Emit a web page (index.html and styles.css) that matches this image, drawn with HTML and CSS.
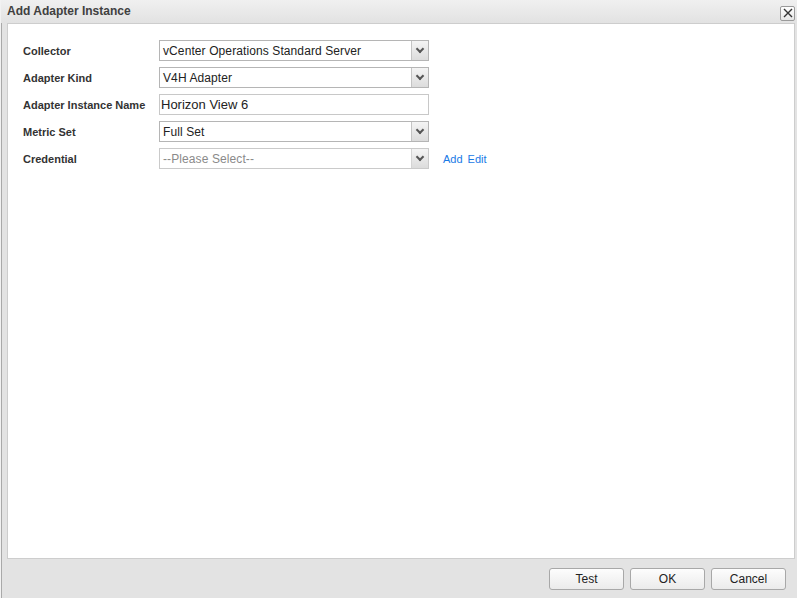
FILE: index.html
```html
<!DOCTYPE html>
<html lang="en">
<head>
  <meta charset="UTF-8" />
  <title>Add Adapter Instance</title>
  <link rel="stylesheet" href="styles.css">
</head>
<body>
  <div class="dialog">
    <!-- Title bar -->
    <div class="dialog-header">
      <span class="dialog-title">Add Adapter Instance</span>
      <span class="close-btn">
        <svg width="10" height="10" viewBox="0 0 10 10">
          <path d="M1 1 L9 9 M9 1 L1 9" stroke="#333" stroke-width="1.4" fill="none"/>
        </svg>
      </span>
    </div>

    <!-- Form body -->
    <div class="dialog-body">
      <div class="form-row">
        <label>Collector</label>
        <div class="combo">
          <span class="combo-text">vCenter Operations Standard Server</span>
          <span class="combo-btn"><i class="chevron"></i></span>
        </div>
      </div>
      <div class="form-row">
        <label>Adapter Kind</label>
        <div class="combo">
          <span class="combo-text">V4H Adapter</span>
          <span class="combo-btn"><i class="chevron"></i></span>
        </div>
      </div>
      <div class="form-row">
        <label>Adapter Instance Name</label>
        <div class="text-field">Horizon View 6</div>
      </div>
      <div class="form-row">
        <label>Metric Set</label>
        <div class="combo">
          <span class="combo-text">Full Set</span>
          <span class="combo-btn"><i class="chevron"></i></span>
        </div>
      </div>
      <div class="form-row">
        <label>Credential</label>
        <div class="combo disabled">
          <span class="combo-text">--Please Select--</span>
          <span class="combo-btn"><i class="chevron"></i></span>
        </div>
        <div class="links">
          <a href="#">Add</a>
          <a href="#">Edit</a>
        </div>
      </div>
    </div>

    <!-- Buttons -->
    <div class="dialog-footer">
      <button>Test</button>
      <button>OK</button>
      <button>Cancel</button>
    </div>
  </div>
</body>
</html>
```

FILE: styles.css
```css
body {
  margin: 0;
  font-family: 'Liberation Sans', Arial, sans-serif;
  background: #e3e3e3;
}

.dialog {
  width: 797px;
  height: 598px;
  box-sizing: border-box;
  display: flex;
  flex-direction: column;
  background: #e3e3e3;
  border-left: 1px solid #f2f2f2;
  box-shadow: inset 1px 0 0 #a9a9a9;
}

.dialog-header {
  height: 23px;
  display: flex;
  align-items: center;
  justify-content: space-between;
  padding: 0 2px 0 6px;
  background: linear-gradient(#f0f0f0, #e2e2e2);
}

.dialog-title {
  font-size: 12px;
  font-weight: bold;
  color: #404040;
  margin-top: -1px;
}

.close-btn {
  width: 13px;
  height: 13px;
  margin-top: 3px;
  border: 1px solid #9a9a9a;
  border-radius: 2px;
  background: linear-gradient(#ffffff, #e6e6e6);
  display: flex;
  align-items: center;
  justify-content: center;
}

.dialog-body {
  flex: 1;
  margin: 0 2px 0 6px;
  background: #fff;
  border: 1px solid #cdcdcd;
  padding: 16px 0 0 15px;
  display: flex;
  flex-direction: column;
  gap: 6px;
}

.form-row {
  display: flex;
  align-items: center;
  height: 21px;
}

.form-row label {
  width: 136px;
  font-size: 11px;
  font-weight: bold;
  color: #333;
  padding-top: 1px;
}

.combo {
  width: 270px;
  height: 21px;
  box-sizing: border-box;
  border: 1px solid #b5b5b5;
  display: flex;
  align-items: stretch;
  background: #fff;
}

.combo-text {
  flex: 1;
  font-size: 12px;
  letter-spacing: 0.1px;
  color: #222;
  padding: 1px 0 0 3px;
  line-height: 19px;
}

.combo-btn {
  width: 16px;
  border-left: 1px solid #c4c4c4;
  background: linear-gradient(#f4f4f4, #dcdcdc);
  display: flex;
  align-items: center;
  justify-content: center;
}

.chevron {
  width: 4px;
  height: 4px;
  border-right: 2px solid #555;
  border-bottom: 2px solid #555;
  transform: rotate(45deg);
  margin-top: -3px;
}

.combo.disabled {
  border-color: #cacaca;
}

.combo.disabled .combo-text {
  color: #8a8a8a;
}

.combo.disabled .combo-btn {
  border-left-color: #d4d4d4;
}

.text-field {
  width: 270px;
  height: 21px;
  box-sizing: border-box;
  border: 1px solid #c8c8c8;
  font-size: 13px;
  color: #222;
  padding-left: 1px;
  line-height: 19px;
}

.links {
  margin-left: 14px;
  display: flex;
  gap: 5px;
  padding-top: 1px;
}

.links a {
  font-size: 11px;
  color: #1a7ae6;
  text-decoration: none;
}

.dialog-footer {
  height: 39px;
  display: flex;
  align-items: center;
  justify-content: flex-end;
  gap: 6px;
  padding-right: 11px;
}

.dialog-footer button {
  width: 75px;
  height: 22px;
  margin-top: 1px;
  font-family: 'Liberation Sans', Arial, sans-serif;
  font-size: 12px;
  color: #222;
  border: 1px solid #a8a8a8;
  border-radius: 3px;
  background: linear-gradient(#fdfdfd, #ebebeb);
  padding: 0;
}
```
